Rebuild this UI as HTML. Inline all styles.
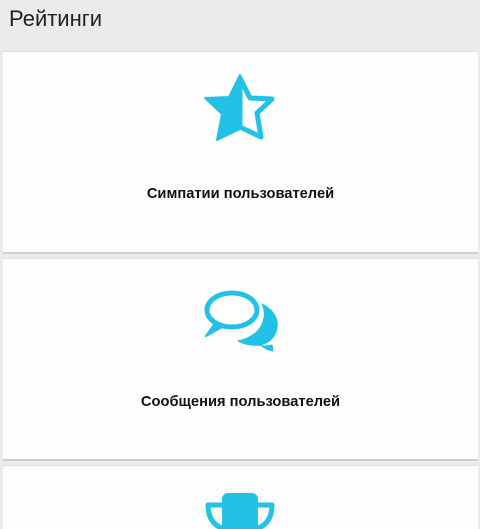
<!DOCTYPE html>
<html><head><meta charset="utf-8"><style>
html,body{margin:0;height:529px;overflow:hidden}
body{background:#ebebeb;font-family:"Liberation Sans","Noto Sans CJK JP",sans-serif;width:480px;position:relative}
h1{position:absolute;left:9px;top:6px;margin:0;font-weight:normal;font-size:22px;color:#222}
.card{position:absolute;left:3px;width:475px;height:200px;background:#fdfdfd;border-bottom:2px solid #cfcfcf;border-top:1px solid #e0e0e0}
.t{position:absolute;left:0;right:0;text-align:center;font-weight:bold;font-size:14.7px;color:#111}
svg{position:absolute;left:0;top:0}
</style></head><body>
<h1>Рейтинги</h1>
<div class="card" style="top:51px"><div class="t" style="top:134px">Симпатии пользователей</div></div>
<div class="card" style="top:258px"><div class="t" style="top:135px">Сообщения пользователей</div></div>
<div class="card" style="top:465px;height:64px;border-bottom:0"></div>
<svg width="480" height="529">
<g fill="#22c1e8" stroke="#22c1e8" stroke-linejoin="round">
<polygon points="240,75 229,97 205,98 222,114 217,140 240,129" stroke-width="2"/>
<polygon points="240,78 250,98 272,99 257,113 261,137 240,127" fill="#fff" stroke-width="5"/>
<path d="M247,340 C255,346 265,347 272,345 L273,351 C268,350 264,348 262,346 Z" stroke-width="1"/>
<path d="M262,304 C274,310 280,320 276,332 C273,340 266,344 260,345 C252,346 244,344 238,341 C252,338 262,330 264,318 C265,312 264,308 262,304 Z" stroke-width="1"/>
<ellipse cx="232" cy="310" rx="25" ry="17" fill="#fff" stroke-width="5"/>
<path d="M216,322 L206,336 L224,326 Z" stroke-width="2"/>
<rect x="222" y="493" width="36" height="45" rx="6" stroke="none"/>
<path d="M224,505 H208 C208,522 218,528 228,530" fill="none" stroke-width="5"/>
<path d="M256,505 H272 C272,522 262,528 252,530" fill="none" stroke-width="5"/>
</g>
</svg>
</body></html>
